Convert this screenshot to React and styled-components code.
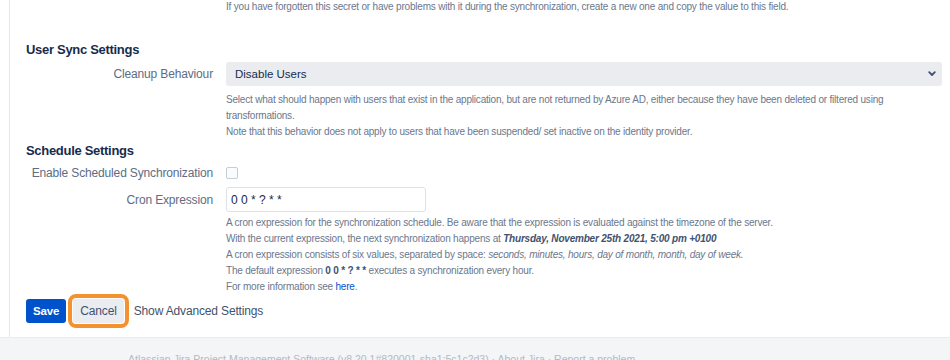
import React, { useState } from 'react';
import styled, { createGlobalStyle } from 'styled-components';

const GlobalStyle = createGlobalStyle`
  body {
    margin: 0;
    background: #fff;
    font-family: "Liberation Sans", Arial, sans-serif;
    color: #172b4d;
  }
`;

const Page = styled.div`
  display: flex;
  flex-direction: column;
  height: 360px;
  overflow: hidden;
`;

const Main = styled.div`
  margin-left: 9px;
  border-left: 1px solid #e4e6ea;
  padding: 0 8px 14px 16px;
`;

const Footer = styled.div`
  flex: 1;
  background: #f4f5f7;
  border-top: 1px solid #ebecf0;
  padding: 15px 0 0 128px;
  font-size: 10.5px;
  color: #b3bac5;
  white-space: nowrap;
`;

const Row = styled.div`
  display: grid;
  grid-template-columns: 187px 1fr;
  column-gap: 13px;
  align-items: center;
  min-height: ${(p) => p.h || 22}px;
`;

const Label = styled.label`
  text-align: right;
  white-space: nowrap;
  font-size: 12px;
  letter-spacing: -0.15px;
  color: #5e6c84;
`;

const Help = styled.div`
  grid-column: 2;
  font-size: 10px;
  letter-spacing: -0.2px;
  line-height: 16px;
  color: #6b778c;
  margin-top: ${(p) => p.mt || 0}px;
  b { color: #42526e; }
  em { font-style: italic; }
  strong { font-style: italic; font-weight: bold; color: #42526e; }
  a { color: #0052cc; text-decoration: none; }
`;

const Heading = styled.h3`
  margin: ${(p) => p.mt || 0}px 0 0;
  font-size: 13px;
  letter-spacing: -0.3px;
  line-height: 20px;
  font-weight: bold;
  color: #172b4d;
`;

const SelectBox = styled.div`
  position: relative;
  display: flex;
  align-items: center;
  height: 24px;
  padding: 0 9px;
  background: #ebecf0;
  border-radius: 3px;
  font-size: 11.5px;
  color: #172b4d;
  svg { position: absolute; right: 6px; top: 9px; }
`;

const Checkbox = styled.span`
  display: block;
  width: 10px;
  height: 10px;
  border: 1px solid #c7ccd4;
  border-radius: 2px;
  background: #fafbfc;
`;

const TextInput = styled.input`
  box-sizing: border-box;
  width: 200px;
  height: 25px;
  padding: 0 4px;
  border: 1px solid #dfe1e6;
  border-radius: 3px;
  font-family: inherit;
  font-size: 12px;
  color: #172b4d;
  outline: none;
`;

const Actions = styled.div`
  display: flex;
  align-items: center;
  margin-top: 4px;
  gap: 7px;
`;

const Button = styled.button`
  height: 24px;
  padding: 0 ${(p) => p.px || 7}px;
  border: none;
  border-radius: 3px;
  font-family: inherit;
  font-size: ${(p) => (p.primary ? 11.5 : 12)}px;
  letter-spacing: -0.15px;
  font-weight: ${(p) => (p.primary ? 'bold' : 'normal')};
  background: ${(p) => (p.primary ? '#0052cc' : p.subtle ? 'transparent' : '#ebecf0')};
  color: ${(p) => (p.primary ? '#fff' : '#42526e')};
  outline: ${(p) => (p.highlight ? '4px solid #f4922f' : 'none')};
  outline-offset: 1px;
`;

function Chevron() {
  return (
    <svg width="8" height="6" viewBox="0 0 8 6">
      <path d="M1.2 1.2 L4 4 L6.8 1.2" fill="none" stroke="#42526e" strokeWidth="1.8" strokeLinecap="round" strokeLinejoin="round" />
    </svg>
  );
}

export default function App() {
  const [cron, setCron] = useState('0 0 * ? * *');

  return (
    <Page>
      <GlobalStyle />
      <Main>
        <Row h={15}>
          <Help style={{ marginTop: -2 }}>
            If you have forgotten this secret or have problems with it during the synchronization, create a new one and copy the value to this field.
          </Help>
        </Row>

        <Heading mt={25}>User Sync Settings</Heading>
        <Row h={24} style={{ marginTop: 2 }}>
          <Label>Cleanup Behaviour</Label>
          <SelectBox>
            Disable Users
            <Chevron />
          </SelectBox>
        </Row>
        <Row>
          <Help mt={6}>
            Select what should happen with users that exist in the application, but are not returned by Azure AD, either because they have been deleted or filtered using transformations.
            <br />
            Note that this behavior does not apply to users that have been suspended/ set inactive on the identity provider.
          </Help>
        </Row>

        <Heading mt={1}>Schedule Settings</Heading>
        <Row h={23}>
          <Label>Enable Scheduled Synchronization</Label>
          <Checkbox />
        </Row>
        <Row h={31}>
          <Label>Cron Expression</Label>
          <TextInput value={cron} onChange={(e) => setCron(e.target.value)} />
        </Row>
        <Row>
          <Help>
            A cron expression for the synchronization schedule. Be aware that the expression is evaluated against the timezone of the server.
            <br />
            With the current expression, the next synchronization happens at <strong>Thursday, November 25th 2021, 5:00 pm +0100</strong>
            <br />
            A cron expression consists of six values, separated by space: <em>seconds, minutes, hours, day of month, month, day of week.</em>
            <br />
            The default expression <b>0 0 * ? * *</b> executes a synchronization every hour.
            <br />
            For more information see <a href="#">here</a>.
          </Help>
        </Row>

        <Actions>
          <Button primary>Save</Button>
          <Button highlight>Cancel</Button>
          <Button subtle px={3}>Show Advanced Settings</Button>
        </Actions>
      </Main>
      <Footer>
        Atlassian Jira Project Management Software (v8.20.1#820001-sha1:5c1c2d3) · About Jira · Report a problem
      </Footer>
    </Page>
  );
}
